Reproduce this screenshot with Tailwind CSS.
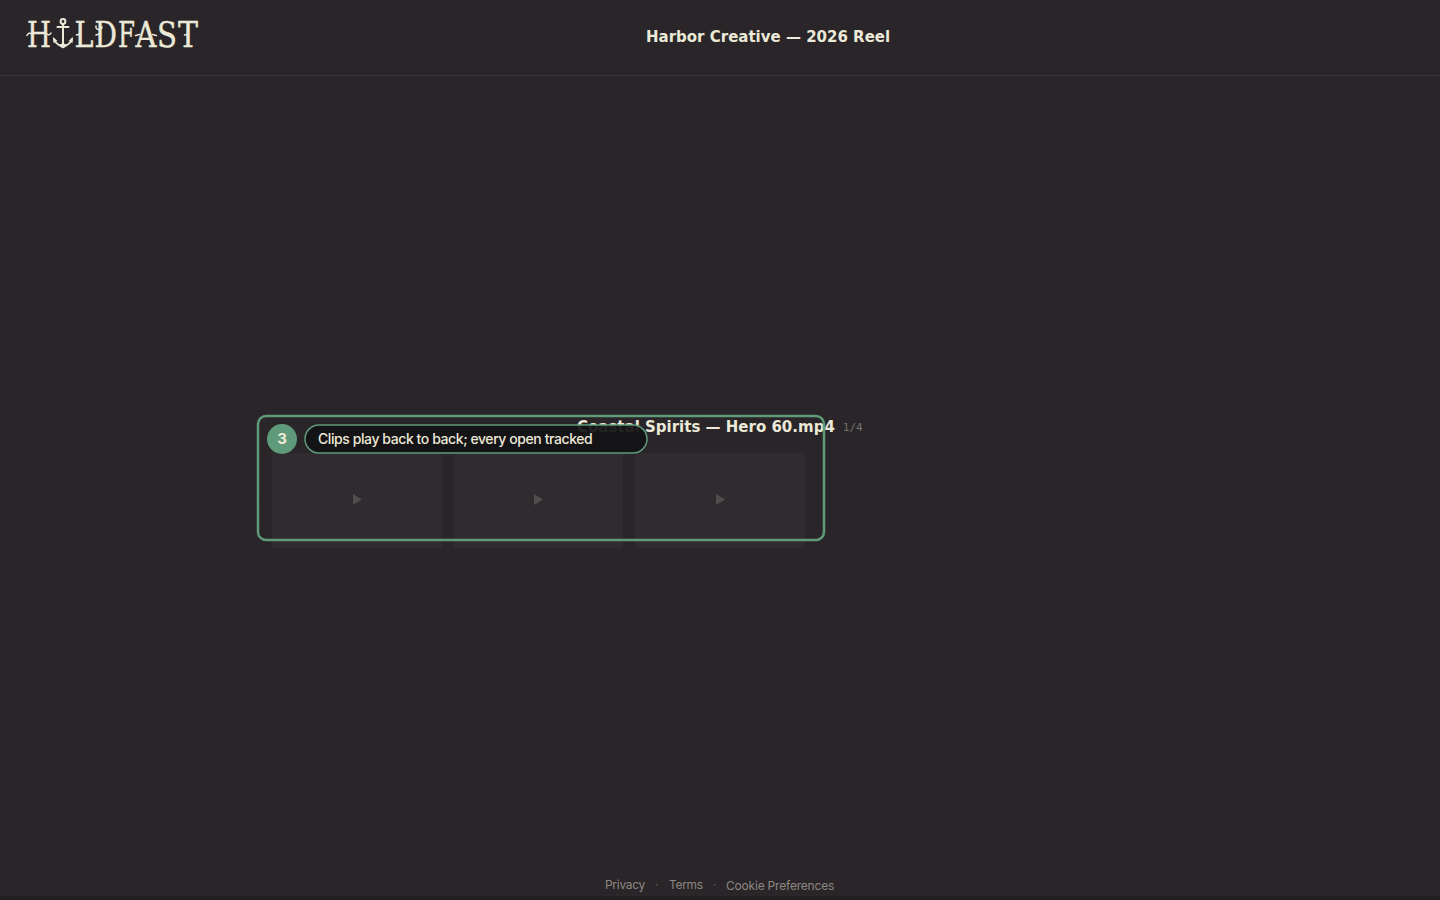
<!DOCTYPE html>
<html lang="en">

<head>
    <meta charset="UTF-8">
    <meta name="viewport" content="width=device-width, initial-scale=1.0">
    <title>Harbor Creative — 2026 Reel</title>
    <script src="https://cdn.jsdelivr.net/npm/@tailwindcss/browser@4"></script>
</head>

<body class="bg-[#292528] text-[#ece9d8] h-screen overflow-hidden font-[Inter,sans-serif]">
    <div class="relative h-full flex flex-col border-b-4 border-[#231e22]">
        <header class="h-[76px] shrink-0 flex items-center border-b border-[#3a3538]">
            <!-- Logo: wordmark with an anchor for the O -->
            <svg class="ml-[24px] w-[180px] h-[40px] -mt-[7px] shrink-0" viewBox="24 14 180 40" fill="none" stroke-linecap="round" stroke-linejoin="round">
                <g fill="#ece9d8" stroke="#ece9d8" stroke-width="0.4" font-family="DejaVu Serif, serif" font-size="35">
                    <text x="27" y="46.500" textLength="24" lengthAdjust="spacingAndGlyphs">H</text>
                    <text x="74.500" y="46.500" textLength="19" lengthAdjust="spacingAndGlyphs">L</text>
                    <text x="94.500" y="46.500" textLength="22.500" lengthAdjust="spacingAndGlyphs">D</text>
                    <text x="118" y="46.500" textLength="17" lengthAdjust="spacingAndGlyphs">F</text>
                    <text x="135.500" y="46.500" textLength="21" lengthAdjust="spacingAndGlyphs">A</text>
                    <text x="157" y="46.500" textLength="20" lengthAdjust="spacingAndGlyphs">S</text>
                    <text x="178" y="46.500" textLength="20" lengthAdjust="spacingAndGlyphs">T</text>
                </g>
                <g stroke="#ece9d8" stroke-width="2">
                    <circle cx="63" cy="21.500" r="2.400" />
                    <path d="M63 24v22M57.500 27h11M54 39c.5 4.500 5 6 9 8c4-2 8.500-3.500 9-8" />
                </g>
                <path d="M53 37l4.500 4-4 2zM73 37l-4.500 4 4 2zM59 45l4-2 4 2-4 3.500z" fill="#ece9d8" />
                <!-- spurs on the stems -->
                <g stroke="#ece9d8" stroke-width="1.500">
                    <path d="M27 35.500c1-2.500 3-3 5-1.500M46 33.500c2 1.800 4 1.500 5-.5M76.500 35l3-1M96 26c-1 4 5 5 6 1M96 35l3-1M135.500 35.500l4-1M152.500 34.500l4 1M184.500 35l4-1" />
                </g>
            </svg>
            <h1 class="ml-[442px] -mt-[1px] text-[15px] leading-5 font-bold whitespace-nowrap font-[DejaVu_Sans,sans-serif]">Harbor Creative — 2026 Reel</h1>
        </header>

        <main class="flex-1 pt-[341px]">
            <div class="flex items-center h-5 ml-[577px] gap-2">
                <h2 class="text-[15px] leading-5 font-bold whitespace-nowrap font-[DejaVu_Sans,sans-serif]">Coastal Spirits — Hero 60.mp4</h2>
                <span class="pt-[2px] text-[11px] text-[#777170] font-[DejaVu_Sans_Mono,monospace]">1/4</span>
            </div>
            <div class="grid grid-cols-3 gap-3 w-[533px] ml-[272px] mt-[16px]">
                <div class="h-[95px] rounded-[2px] bg-[#302b2f] flex items-center justify-center pb-[2px] pl-px">
                    <svg class="w-[9px] h-[11px]" viewBox="0 0 9 11" fill="#514c4d"><path d="M0 0l9 5.500-9 5.500z" /></svg>
                </div>
                <div class="h-[95px] rounded-[2px] bg-[#302b2f] flex items-center justify-center pb-[2px]">
                    <svg class="w-[9px] h-[11px]" viewBox="0 0 9 11" fill="#514c4d"><path d="M0 0l9 5.500-9 5.500z" /></svg>
                </div>
                <div class="h-[95px] rounded-[2px] bg-[#302b2f] flex items-center justify-center pb-[2px]">
                    <svg class="w-[9px] h-[11px]" viewBox="0 0 9 11" fill="#514c4d"><path d="M0 0l9 5.500-9 5.500z" /></svg>
                </div>
            </div>
        </main>

        <footer class="h-5 mb-[1px] flex items-center ml-[605px] text-[12px] text-[#8d8782] whitespace-nowrap">
            <a class="w-[50px] tracking-[-0.3px]">Privacy</a>
            <span class="w-[14px] text-[#5f5a5a]">·</span>
            <a class="w-[44px] tracking-[-0.3px]">Terms</a>
            <span class="w-[13px] text-[#5f5a5a]">·</span>
            <a class="pt-[2px] tracking-[-0.2px]">Cookie Preferences</a>
        </footer>

        <!-- Callout over the clip strip -->
        <svg class="absolute left-[256px] top-[414px] w-[570px] h-[128px]" viewBox="0 0 570 128" fill="none">
            <rect x="2" y="2" width="566" height="124" rx="8" stroke="#5f9a7a" stroke-width="2.500" />
            <rect x="49" y="11" width="342" height="28" rx="14" fill="#121113" fill-opacity="0.920" stroke="#5f9a7a" stroke-width="1.500" />
        </svg>
        <div class="absolute left-[267px] top-[424px] flex items-center">
            <span class="w-[30px] h-[30px] rounded-full bg-[#5f9a7a] flex items-center justify-center text-[15px] font-bold">3</span>
            <span class="pl-[21px] pb-px text-[14px] font-medium whitespace-nowrap tracking-[-0.42px]">Clips play back to back; every open tracked</span>
        </div>
    </div>
</body>

</html>
